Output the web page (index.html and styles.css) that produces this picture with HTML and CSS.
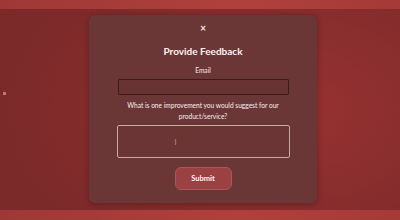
FILE: index.html
```html
<!DOCTYPE html>
<html lang="en">

<head>
    <meta charset="UTF-8">
    <meta name="viewport" content="width=device-width, initial-scale=1.0">
    <title>Feedback</title>
    <link rel="stylesheet" href="styles.css">
</head>

<body>
    <div class="overlay">
        <span class="dot"></span>
        <div class="modal">
            <button class="close">&times;</button>
            <h2 class="title">Provide Feedback</h2>
            <label class="label" for="email">Email</label>
            <input type="text" class="email" id="email">
            <label class="label question" for="idea">What is one improvement you would suggest for our product/service?</label>
            <div class="idea-wrap">
                <textarea class="idea" id="idea"></textarea>
                <span class="cursor">I</span>
            </div>
            <button class="submit">Submit</button>
        </div>
    </div>
</body>

</html>
```

FILE: styles.css
```css
body {
    margin: 0;
    height: 220px;
    overflow: hidden;
    padding-top: 9px;
    box-sizing: border-box;
    background: linear-gradient(90deg, #9e3836, #b0403c 60%, #a53a38);
    font-family: Lato, "Liberation Sans", sans-serif;
    color: #f8eeee;
}

.overlay {
    height: 201px;
    position: relative;
    display: flex;
    justify-content: center;
    align-items: flex-start;
    padding: 6px 0 0 6px;
    box-sizing: border-box;
    background: radial-gradient(ellipse 70% 90% at 70% 50%, #9a3232, #882d2d 55%, #7b2929);
}

.dot {
    position: absolute;
    left: 3px;
    top: 83px;
    width: 3px;
    height: 3px;
    background: #b87b7b;
}

.modal {
    width: 228px;
    height: 188px;
    box-sizing: border-box;
    padding: 8px 0 13px;
    border-radius: 6px;
    background-color: #6b3636;
    box-shadow: 0 1px 6px rgba(40, 0, 0, 0.35);
    display: flex;
    flex-direction: column;
    align-items: center;
}

.close {
    border: none;
    background: none;
    padding: 0;
    color: #f5e6e6;
    font-size: 8px;
    font-weight: 700;
    line-height: 12px;
    font-family: "DejaVu Sans", sans-serif;
    cursor: pointer;
}

.title {
    margin: 9px 0 0;
    font-size: 10px;
    line-height: 14px;
    font-weight: 700;
    color: #fbf2f2;
}

.label {
    display: block;
    margin-top: 7px;
    font-size: 6.6px;
    line-height: 10px;
    text-align: center;
}

.question {
    margin-top: 5px;
    width: 175px;
    line-height: 11px;
}

.email {
    margin-top: 4px;
    width: 171px;
    height: 16px;
    box-sizing: border-box;
    border: 1px solid #3a1c1c;
    border-radius: 1px;
    background-color: #6a3333;
}

.idea-wrap {
    position: relative;
    margin-top: 3px;
}

.idea {
    display: block;
    width: 173px;
    height: 33px;
    box-sizing: border-box;
    resize: none;
    border: 1px solid #c9a9a9;
    border-radius: 2px;
    background-color: #6b3535;
}

.cursor {
    position: absolute;
    left: 58px;
    top: 13px;
    font-size: 7px;
    line-height: 8px;
    color: #b99696;
}

.submit {
    margin-top: 9px;
    width: 57px;
    height: 23px;
    border: 1px solid #a95757;
    border-radius: 6px;
    background-color: #9b4141;
    color: #fff6f6;
    font-family: Lato, "Liberation Sans", sans-serif;
    font-size: 7.5px;
    font-weight: 700;
    cursor: pointer;
}
```
